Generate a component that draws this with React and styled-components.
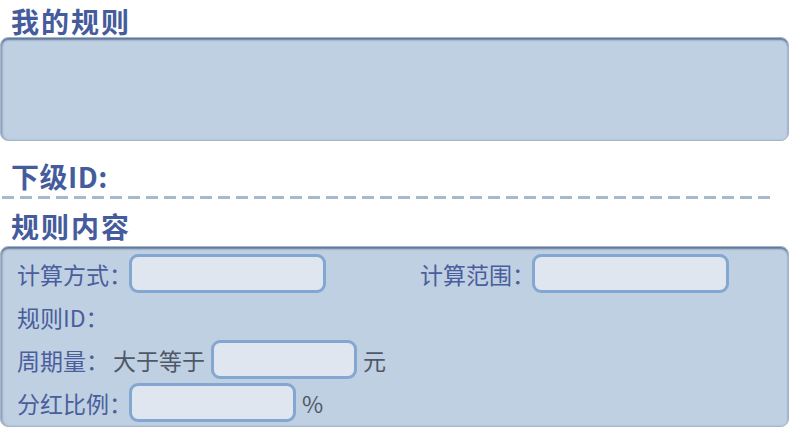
import styled, { createGlobalStyle } from 'styled-components';

const GlobalStyle = createGlobalStyle`
  body {
    margin: 0;
    background: #ffffff;
    font-family: "Noto Sans CJK SC", "Noto Sans", sans-serif;
  }
`;

const Page = styled.div`
  width: 789px;
  display: flex;
  flex-direction: column;
`;

const SectionTitle = styled.h2`
  margin: 0 0 ${(p) => p.$mb || '0'};
  padding: ${(p) => p.$pad || '0'} 0 0 11px;
  font-size: 28px;
  letter-spacing: ${(p) => p.$ls || '2px'};
  line-height: ${(p) => p.$lh || '34px'};
  font-weight: 700;
  color: #455c9c;
`;

const Panel = styled.div`
  box-sizing: border-box;
  min-height: ${(p) => p.$height || 'auto'};
  background: #bfd0e2;
  border: 1px solid #a3b6cb;
  border-radius: 8px;
  box-shadow: inset 0 2px 2px #5f7797, inset 2px 0 2px #9fb2c8;
  padding: 7px 0 4px 16px;
  display: flex;
  flex-direction: column;
  gap: 4px;
`;

const Dashed = styled.div`
  height: 3px;
  margin: 3px 18px 0 2px;
  background: repeating-linear-gradient(
    to right,
    #a8b9cc 0 12px,
    transparent 12px 18px
  );
`;

const Row = styled.div`
  height: 39px;
  display: flex;
  align-items: center;
`;

const Field = styled.div`
  display: flex;
  align-items: center;
  width: ${(p) => p.$width || 'auto'};
`;

const Label = styled.span`
  font-size: 23px;
  color: #4a5e9c;
  white-space: nowrap;
  margin-right: ${(p) => p.$gap || '-3px'};
`;

const Note = styled.span`
  font-size: 23px;
  color: #4f5868;
  white-space: nowrap;
  margin: 0 ${(p) => p.$right || '6px'} 0 ${(p) => p.$left || '0'};
`;

const Box = styled.input`
  box-sizing: border-box;
  width: ${(p) => p.$width};
  height: 39px;
  margin: 0;
  padding: 0 8px;
  background: #dfe6f0;
  border: 3px solid #84a7d1;
  border-radius: 9px;
  outline: 0;
  font-size: 16px;
`;

export default function App() {
  return (
    <Page>
      <GlobalStyle />
      <SectionTitle $pad="5px" $lh="32px">我的规则</SectionTitle>
      <Panel $height="104px" />
      <SectionTitle $pad="18px" $ls="0.5px">下级ID:</SectionTitle>
      <Dashed />
      <SectionTitle $pad="7px" $lh="40px">规则内容</SectionTitle>
      <Panel>
        <Row>
          <Field $width="403px">
            <Label>计算方式：</Label>
            <Box $width="197px" />
          </Field>
          <Field>
            <Label>计算范围：</Label>
            <Box $width="197px" />
          </Field>
        </Row>
        <Row>
          <Label>规则ID：</Label>
        </Row>
        <Row>
          <Label $gap="4px">周期量：</Label>
          <Note>大于等于</Note>
          <Box $width="146px" />
          <Note $left="6px">元</Note>
        </Row>
        <Row>
          <Label>分红比例：</Label>
          <Box $width="167px" />
          <Note $left="6px">%</Note>
        </Row>
      </Panel>
    </Page>
  );
}
